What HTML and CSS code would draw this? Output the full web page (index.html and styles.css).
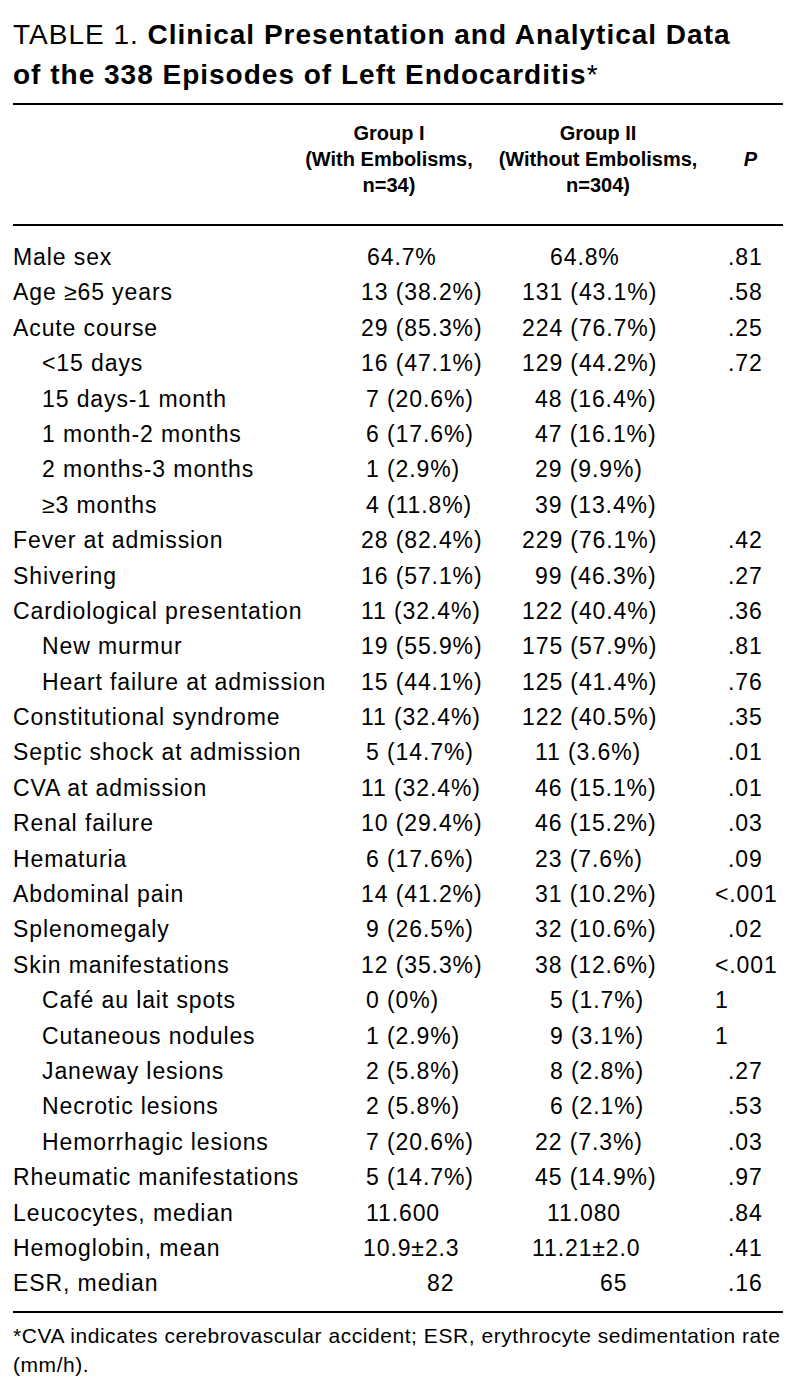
FILE: index.html
```html
<!DOCTYPE html>
<html>
<head>
<meta charset="utf-8">
<link rel="stylesheet" href="styles.css">
</head>
<body>
<div class="page">
  <h1 class="title">TABLE 1. <b>Clinical Presentation and Analytical Data<br>of the 338 Episodes of Left Endocarditis</b><span class="ast">*</span></h1>
  <div class="rule"></div>
  <div class="thead">
    <div></div>
    <div class="th">Group I<br>(With Embolisms,<br>n=34)</div>
    <div class="th">Group II<br>(Without Embolisms,<br>n=304)</div>
    <div class="th"><i>P</i></div>
  </div>
  <div class="rule"></div>
  <div class="tbody">
    <div class="row"><div>Male sex</div><div class="p6">64.7%</div><div class="p28">64.8%</div><div class="p13">.81</div></div>
    <div class="row"><div>Age ≥65 years</div><div>13 (38.2%)</div><div>131 (43.1%)</div><div class="p13">.58</div></div>
    <div class="row"><div>Acute course</div><div>29 (85.3%)</div><div>224 (76.7%)</div><div class="p13">.25</div></div>
    <div class="row"><div class="s1">&lt;15 days</div><div>16 (47.1%)</div><div>129 (44.2%)</div><div class="p13">.72</div></div>
    <div class="row"><div class="s1">15 days-1 month</div><div class="p5">7 (20.6%)</div><div class="p13">48 (16.4%)</div><div></div></div>
    <div class="row"><div class="s1">1 month-2 months</div><div class="p5">6 (17.6%)</div><div class="p13">47 (16.1%)</div><div></div></div>
    <div class="row"><div class="s1">2 months-3 months</div><div class="p5">1 (2.9%)</div><div class="p13">29 (9.9%)</div><div></div></div>
    <div class="row"><div class="s1">≥3 months</div><div class="p5">4 (11.8%)</div><div class="p13">39 (13.4%)</div><div></div></div>
    <div class="row"><div>Fever at admission</div><div>28 (82.4%)</div><div>229 (76.1%)</div><div class="p13">.42</div></div>
    <div class="row"><div>Shivering</div><div>16 (57.1%)</div><div class="p13">99 (46.3%)</div><div class="p13">.27</div></div>
    <div class="row"><div>Cardiological presentation</div><div>11 (32.4%)</div><div>122 (40.4%)</div><div class="p13">.36</div></div>
    <div class="row"><div class="s1">New murmur</div><div>19 (55.9%)</div><div>175 (57.9%)</div><div class="p13">.81</div></div>
    <div class="row"><div class="s1">Heart failure at admission</div><div>15 (44.1%)</div><div>125 (41.4%)</div><div class="p13">.76</div></div>
    <div class="row"><div>Constitutional syndrome</div><div>11 (32.4%)</div><div>122 (40.5%)</div><div class="p13">.35</div></div>
    <div class="row"><div>Septic shock at admission</div><div class="p5">5 (14.7%)</div><div class="p13">11 (3.6%)</div><div class="p13">.01</div></div>
    <div class="row"><div>CVA at admission</div><div>11 (32.4%)</div><div class="p13">46 (15.1%)</div><div class="p13">.01</div></div>
    <div class="row"><div>Renal failure</div><div>10 (29.4%)</div><div class="p13">46 (15.2%)</div><div class="p13">.03</div></div>
    <div class="row"><div>Hematuria</div><div class="p5">6 (17.6%)</div><div class="p13">23 (7.6%)</div><div class="p13">.09</div></div>
    <div class="row"><div>Abdominal pain</div><div>14 (41.2%)</div><div class="p13">31 (10.2%)</div><div>&lt;.001</div></div>
    <div class="row"><div>Splenomegaly</div><div class="p5">9 (26.5%)</div><div class="p13">32 (10.6%)</div><div class="p13">.02</div></div>
    <div class="row"><div>Skin manifestations</div><div>12 (35.3%)</div><div class="p13">38 (12.6%)</div><div>&lt;.001</div></div>
    <div class="row"><div class="s1">Café au lait spots</div><div class="p5">0 (0%)</div><div class="p28">5 (1.7%)</div><div>1</div></div>
    <div class="row"><div class="s1">Cutaneous nodules</div><div class="p5">1 (2.9%)</div><div class="p28">9 (3.1%)</div><div>1</div></div>
    <div class="row"><div class="s1">Janeway lesions</div><div class="p5">2 (5.8%)</div><div class="p28">8 (2.8%)</div><div class="p13">.27</div></div>
    <div class="row"><div class="s1">Necrotic lesions</div><div class="p5">2 (5.8%)</div><div class="p28">6 (2.1%)</div><div class="p13">.53</div></div>
    <div class="row"><div class="s1">Hemorrhagic lesions</div><div class="p5">7 (20.6%)</div><div class="p13">22 (7.3%)</div><div class="p13">.03</div></div>
    <div class="row"><div>Rheumatic manifestations</div><div class="p5">5 (14.7%)</div><div class="p13">45 (14.9%)</div><div class="p13">.97</div></div>
    <div class="row"><div>Leucocytes, median</div><div class="p5">11.600</div><div class="p25">11.080</div><div class="p13">.84</div></div>
    <div class="row"><div>Hemoglobin, mean</div><div class="p2">10.9±2.3</div><div class="p10">11.21±2.0</div><div class="p13">.41</div></div>
    <div class="row"><div>ESR, median</div><div class="p66">82</div><div class="p78">65</div><div class="p13">.16</div></div>
  </div>
  <div class="rule"></div>
  <p class="note"><span class="nl">*CVA indicates cerebrovascular accident; ESR, erythrocyte sedimentation rate</span><br>(mm/h).</p>
</div>
</body>
</html>
```

FILE: styles.css
```css
html, body {
  margin: 0;
  padding: 0;
  background: #fff;
  color: #000;
}

.page {
  width: 770px;
  padding: 15px 0 0 13px;
  font-family: "Liberation Sans", Arial, Helvetica, sans-serif;
}

.title {
  margin: 0;
  font-size: 28px;
  line-height: 40px;
  font-weight: normal;
  letter-spacing: 1px;
  white-space: nowrap;
}

.title b {
  font-weight: bold;
}

.title .ast {
  font-weight: normal;
}

.rule {
  border-top: 2px solid #000;
}

.title + .rule {
  margin-top: 8px;
}

.thead {
  display: grid;
  grid-template-columns: 287px 178px 240px 65px;
  padding: 15px 0 26px;
  font-size: 20px;
  line-height: 26px;
  font-weight: bold;
  white-space: nowrap;
}

.th {
  text-align: center;
  align-self: center;
}

.tbody {
  padding: 14px 0 9px;
  font-size: 23px;
  letter-spacing: 0.9px;
}

.row {
  display: grid;
  grid-template-columns: 348px 161px 193px 68px;
  height: 35.4px;
  line-height: 35.4px;
  white-space: nowrap;
}

.s1 { padding-left: 29px; }
.p2 { padding-left: 2px; }
.p5 { padding-left: 5px; }
.p6 { padding-left: 6px; }
.p10 { padding-left: 10px; }
.p13 { padding-left: 13px; }
.p25 { padding-left: 25px; }
.p28 { padding-left: 28px; }
.p66 { padding-left: 66px; }
.p78 { padding-left: 78px; }

.note {
  margin: 8px 0 0;
  font-size: 21px;
  line-height: 29px;
  letter-spacing: 0.55px;
}

.note .nl {
  white-space: nowrap;
}
```
